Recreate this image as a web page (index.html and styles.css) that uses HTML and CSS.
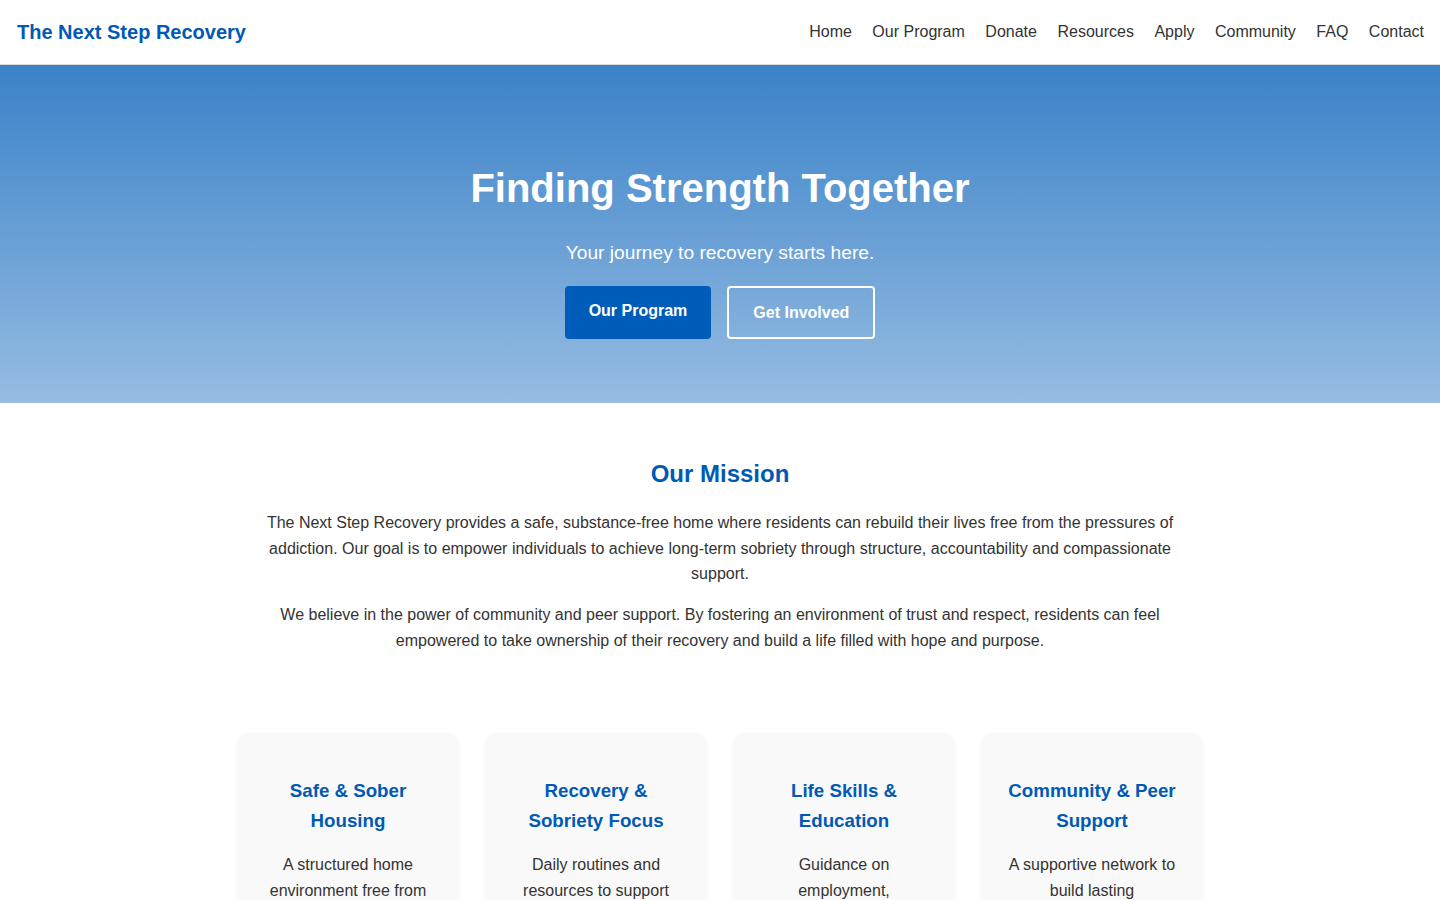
FILE: index.html
```html
<!DOCTYPE html>
<html lang="en">
<head>
<meta charset="utf-8">
<title>The Next Step Recovery</title>
<link rel="stylesheet" href="styles.css">
</head>
<body>
<header class="site-header">
  <a class="logo" href="#">The Next Step Recovery</a>
  <nav class="main-nav">
    <a href="#">Home</a>
    <a href="#">Our Program</a>
    <a href="#">Donate</a>
    <a href="#">Resources</a>
    <a href="#">Apply</a>
    <a href="#">Community</a>
    <a href="#">FAQ</a>
    <a href="#">Contact</a>
  </nav>
</header>

<section class="hero">
  <h1>Finding Strength Together</h1>
  <p class="hero-sub">Your journey to recovery starts here.</p>
  <div class="hero-actions">
    <a class="btn btn-primary" href="#">Our Program</a>
    <a class="btn btn-outline" href="#">Get Involved</a>
  </div>
</section>

<section class="mission">
  <h2>Our Mission</h2>
  <p>The Next Step Recovery provides a safe, substance-free home where residents can rebuild their lives free from the pressures of addiction. Our goal is to empower individuals to achieve long-term sobriety through structure, accountability and compassionate support.</p>
  <p>We believe in the power of community and peer support. By fostering an environment of trust and respect, residents can feel empowered to take ownership of their recovery and build a life filled with hope and purpose.</p>
</section>

<section class="features">
  <div class="card">
    <h3>Safe &amp; Sober Housing</h3>
    <p>A structured home environment free from drugs and alcohol.</p>
  </div>
  <div class="card">
    <h3>Recovery &amp; Sobriety Focus</h3>
    <p>Daily routines and resources to support long-term sobriety.</p>
  </div>
  <div class="card">
    <h3>Life Skills &amp; Education</h3>
    <p>Guidance on employment, communication and independent living.</p>
  </div>
  <div class="card">
    <h3>Community &amp; Peer Support</h3>
    <p>A supportive network to build lasting relationships and accountability.</p>
  </div>
</section>
</body>
</html>
```

FILE: styles.css
```css
* {
  box-sizing: border-box;
}

body {
  margin: 0;
  font-family: "Liberation Sans", Arial, sans-serif;
  color: #333;
  background: #fff;
}

a {
  text-decoration: none;
}

.site-header {
  display: flex;
  justify-content: space-between;
  align-items: center;
  height: 65px;
  padding: 0 16px 0 17px;
  border-bottom: 1px solid #dcdcdc;
  background: #fff;
}

.logo {
  font-size: 20px;
  font-weight: bold;
  color: #005ab5;
}

.main-nav {
  display: flex;
  gap: 20.5px;
}

.main-nav a {
  font-size: 16px;
  color: #333;
}

.hero {
  background: linear-gradient(to bottom, #3a82c8, #96bce2);
  text-align: center;
  color: #fff;
  padding: 99px 20px 64px;
}

.hero h1 {
  margin: 0;
  font-size: 40px;
  line-height: 48px;
  font-weight: bold;
}

.hero-sub {
  margin: 25.6px 0 17.7px;
  font-size: 19.2px;
  line-height: 1.6;
}

.hero-actions {
  display: flex;
  justify-content: center;
  gap: 16px;
}

.btn {
  display: inline-block;
  font-size: 16px;
  font-weight: bold;
  border-radius: 4px;
  color: #fff;
}

.btn-primary {
  background: #005cb9;
  padding: 14px 24px 18px;
  line-height: 21px;
}

.btn-outline {
  border: 2px solid #fff;
  padding: 15px 24px;
  line-height: 19px;
}

.mission {
  max-width: 960px;
  margin: 0 auto;
  padding: 57px 0 0;
  text-align: center;
}

.mission h2 {
  margin: 0 0 22px;
  font-size: 24px;
  color: #005ab5;
}

.mission p {
  margin: 0 0 15.5px;
  font-size: 16px;
  line-height: 1.6;
}

.mission p:last-child {
  margin-bottom: 0;
}

.features {
  width: 966px;
  margin: 0 auto;
  padding: 80px 0 60px;
  display: grid;
  grid-template-columns: repeat(4, 1fr);
  gap: 26px;
}

.card {
  background: #f9f9f9;
  border-radius: 12px;
  padding: 43px 25px 40px;
  text-align: center;
  box-shadow: 0 1px 4px rgba(0, 0, 0, 0.04);
}

.card h3 {
  margin: 0 0 16px;
  font-size: 18.72px;
  line-height: 30px;
  color: #005ab5;
}

.card p {
  margin: 0;
  font-size: 16px;
  line-height: 1.6;
}
```
